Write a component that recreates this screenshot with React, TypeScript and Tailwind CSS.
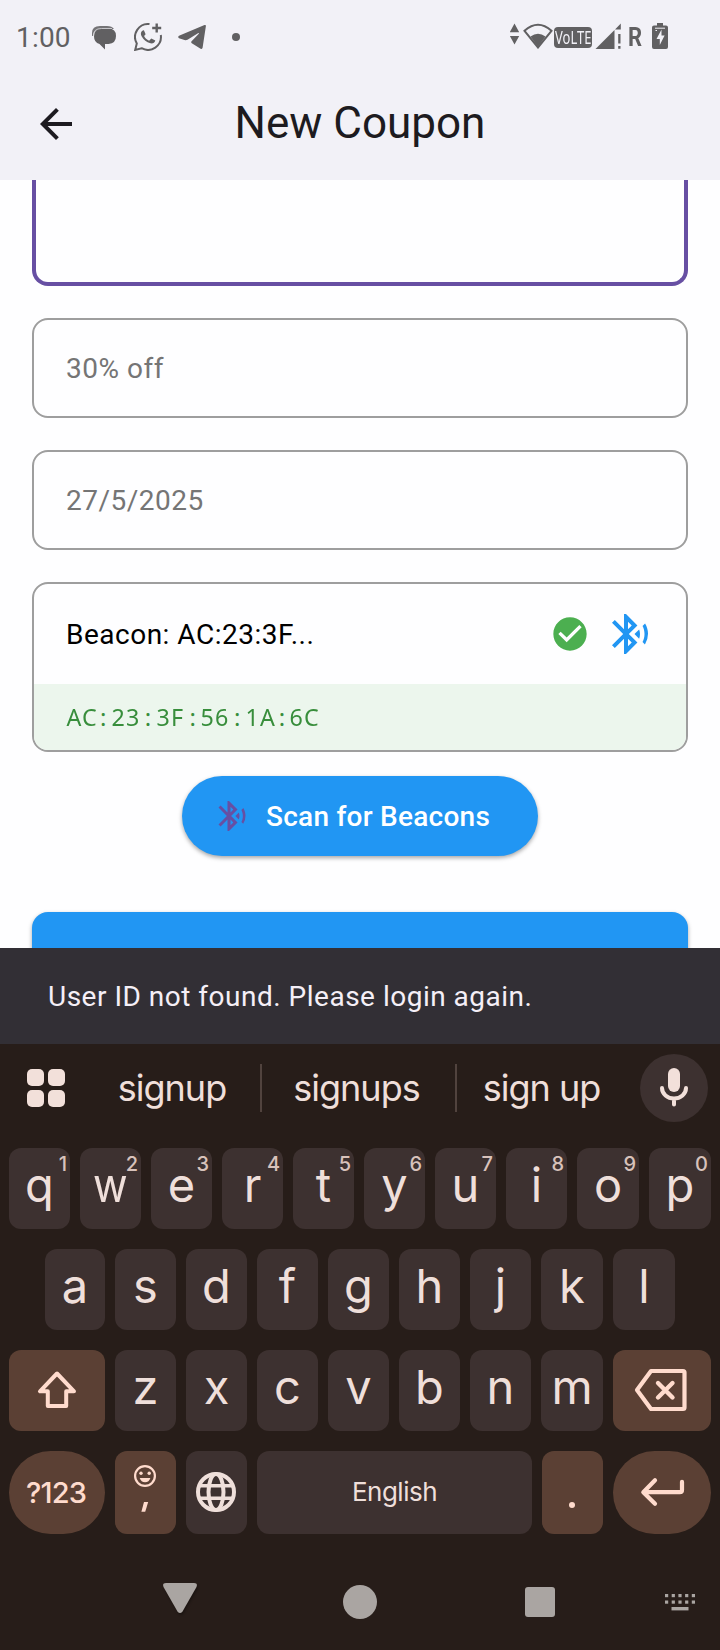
import React from 'react';
import { MdArrowBack, MdBluetoothSearching, MdCheckCircle } from 'react-icons/md';

function StatusBar() {
  return (
    <div className="flex h-[74px] items-center text-[#616062]">
      <span className="ml-4 w-[58px] pt-px text-[28px] leading-none tracking-[0.2px]">1:00</span>
      <svg viewBox="92 24 24 26" className="ml-[18px] h-[26px] w-6">
        <path d="M92 36v-3q0-7 8-7h7q5 0 7 3h-12q-8 0-9 7z" fill="#747376" />
        <path d="M102 28.500h6.500q7.500 0 7.500 7.500t-7.500 8h-3.500v5.500l-5.500-5.500q-5.500-1.500-5.500-7.500 0-8 8-8z" fill="currentColor" />
        <path d="M93.300 36q0-7.500 8.200-7.500H112" fill="none" stroke="#dedde2" strokeWidth=".8" />
      </svg>
      <svg viewBox="134 23 28 28" className="ml-[18px] size-7" fill="none" stroke="currentColor" strokeWidth="2">
        <path d="M149.500 24.100A13 13 0 0 0 136.800 43.500L135.200 49.900L141.600 48.200A13 13 0 0 0 160.800 35" />
        <path d="M156.700 23.500v9M152.200 28h9" strokeWidth="2.400" />
        <path d="M142.400 30.800c-1.800 1.300-1.900 3.400-.8 5.500 2 3.700 4.900 6 8.800 7 2.200.5 4.300-.4 4.900-2.700l-4-2-2.200 2.100c-2.400-1-4.100-2.600-5-4.700l1.500-1.700-1.700-4c-.5-.2-1-.1-1.500.5z" fill="currentColor" stroke="none" />
      </svg>
      <svg viewBox="178 25 28 26" className="ml-4 h-[26px] w-7" fill="currentColor">
        <path d="M179 36.800 204.500 26q1.500-.5 1.400 1l-3.300 21.800q-.4 1.600-2 .9l-8.800-5.500q-1.200-1 0-2.200l7-7.200q.5-1.100-.8-.6l-10.500 6.500q-1.500.7-3 .3l-5.500-1.700q-1.700-1.200 0-2.500z" />
      </svg>
      <span className="ml-[26px] size-2 rounded-full bg-[#616062]" />
      <svg viewBox="510 23 10 22" className="mb-[6px] ml-[270px] h-[22px] w-2.5" fill="currentColor">
        <path d="M514.500 23.500l4.700 8.700h-9.400zM514.500 44.500l4.700-8.500h-9.400z" />
      </svg>
      <svg viewBox="523 23 30 26" className="mb-[2px] ml-[3px] h-[26px] w-[30px]">
        <path d="M524.500 30.800q13.500-12 27 0L538 47.500z" fill="none" stroke="currentColor" strokeWidth="2" />
        <path d="M530.500 36.500q7.500-5.500 15 0L538 47z" fill="currentColor" />
      </svg>
      <div className="ml-px flex h-[21px] w-[38px] items-center justify-center rounded-[4px] bg-[#616062]">
        <span className="scale-x-[.72] font-['Noto_Sans'] text-[18px] leading-[21px] text-[#f2f1f7]">VoLTE</span>
      </div>
      <svg viewBox="595 23 27 26" className="mb-[2px] ml-[3px] h-[26px] w-[27px]" fill="currentColor">
        <path d="M595.500 49 614.500 30v19zM615 29.500l5.800-6v6zM618.200 34h2.300v9.500h-2.300zM618.200 46h2.300v2.800h-2.300z" />
      </svg>
      <span className="ml-[6px] w-[15px] text-[25px] leading-none font-bold">
        <span className="inline-block origin-left scale-x-[.88]">R</span>
      </span>
      <svg viewBox="652 23 16 26" className="mb-[2px] ml-[9px] h-[26px] w-4">
        <path d="M657 23h6v2.500h3q2 0 2 2V47q0 2-2 2h-12q-2 0-2-2V27.500q0-2 2-2h3z" fill="currentColor" />
        <path d="M655 28.200h10M655.500 30.500h1.500" stroke="#f2f1f7" strokeWidth="1" />
        <path d="M661.500 29.500l-5 9.500h3.300v6l4.800-9.500h-3.100z" fill="#f2f1f7" />
      </svg>
    </div>
  );
}

function Field({ children }: { children: string }) {
  return (
    <div className="flex h-[100px] items-center rounded-2xl border-2 border-[#9e9e9e] px-8 pt-[2px] text-[28px] tracking-[0.5px] text-[#757575]">
      {children}
    </div>
  );
}

function Form() {
  return (
    <div className="flex h-[768px] flex-col overflow-hidden bg-[#fefeff] px-8">
      <div className="h-[106px] shrink-0 rounded-b-2xl border-4 border-t-0 border-[#674fa3]" />
      <div className="mt-8 flex flex-col gap-8">
        <Field>30% off</Field>
        <Field>27/5/2025</Field>
        <div className="h-[170px] overflow-hidden rounded-2xl border-2 border-[#9e9e9e]">
          <div className="flex h-[100px] items-center pr-8 pl-8">
            <span className="flex-1 pt-[2px] text-[28px] tracking-[0.5px] text-black">Beacon: AC:23:3F...</span>
            <MdCheckCircle className="size-10 text-[#4caf50]" />
            <MdBluetoothSearching className="ml-4 size-12 text-[#2196f3]" />
          </div>
          <div className="h-[66px] bg-[#ecf6ed] pt-[17px] pl-8 font-['Noto_Sans'] text-[24px] leading-[32px] text-[#388e3c]">
            {'AC:23:3F:56:1A:6C'.split(/(:)/).map((part, i) => (
              <span key={i} className={part === ':' ? 'inline-block w-[14.9px] text-center' : 'inline-block w-[29.8px] text-center tracking-[1.2px]'}>
                <span className={part === ':' ? 'inline-block' : 'inline-block scale-x-[.97]'}>{part}</span>
              </span>
            ))}
          </div>
        </div>
      </div>
      <div className="mx-auto mt-6 flex h-20 w-[356px] shrink-0 items-center rounded-full bg-[#2196f3] pl-8 shadow-[0_2px_4px_rgba(0,0,0,0.35)]">
        <MdBluetoothSearching className="size-9 text-[#674fa3]" />
        <span className="ml-4 pt-[2px] text-[28px] font-medium tracking-[0.25px] whitespace-nowrap text-white">Scan for Beacons</span>
      </div>
      <div className="mt-14 h-24 shrink-0 rounded-2xl bg-[#2196f3] shadow-[0_2px_4px_rgba(0,0,0,0.35)]" />
    </div>
  );
}

function Key({ label, hint }: { label: string; hint?: string }) {
  return (
    <div className="relative flex items-center justify-center rounded-xl bg-[#3d3130] pb-[8px] text-[#efdfda]">
      <span className={label === 'w' ? 'scale-x-[.9] text-[47px] leading-none' : 'text-[47px] leading-none'}>{label}</span>
      {hint && <span className="absolute top-[6px] right-[3px] text-[20px] leading-none font-medium text-[#d8c2bb]">{hint}</span>}
    </div>
  );
}

const accent = 'flex items-center justify-center bg-[#5b4034] text-[#ffdbcd]';

function Keyboard() {
  return (
    <div className="flex h-[606px] flex-col bg-[#271d19] font-['Inter',sans-serif] text-[#efdfda]">
      <div className="flex h-[104px] items-start">
        <div className="mt-[25px] ml-[27px] grid grid-cols-2 gap-1">
          {[0, 1, 2, 3].map((n) => (
            <span key={n} className="size-[17px] rounded-[5px] bg-[#f2e0da]" />
          ))}
        </div>
        <div className="mt-[20px] ml-[22px] grid h-12 grid-cols-[173px_2px_193px_2px_171px] items-center text-center text-[36px] leading-none tracking-[-1px] whitespace-nowrap">
          <span className="pr-[3px]">signup</span>
          <span className="h-12 bg-[#51433e]" />
          <span className="pr-1">signups</span>
          <span className="h-12 bg-[#51433e]" />
          <span className="pr-[2px]">sign up</span>
        </div>
        <div className="mt-[10px] ml-[12px] size-[68px] rounded-full bg-[#3d3130]">
          <svg viewBox="640 1054 68 68" className="size-[68px]">
            <rect x="668" y="1068" width="12" height="24" rx="6" fill="#f2e0da" />
            <path d="M662 1088a12 10.500 0 0 0 24 0M674 1099v5.500" fill="none" stroke="#f2e0da" strokeWidth="4" strokeLinecap="round" />
          </svg>
        </div>
      </div>
      <div className="grid h-[81px] grid-cols-[61px_61px_61px_61px_61px_61px_61px_61px_62px_62px] gap-[10px] pl-[9px]">
        {'qwertyuiop'.split('').map((c, i) => (
          <Key key={c} label={c} hint={String((i + 1) % 10)} />
        ))}
      </div>
      <div className="mt-5 grid h-[81px] grid-cols-[60px_61px_61px_61px_61px_61px_61px_62px_62px] gap-[10px] pl-[45px]">
        {'asdfghjkl'.split('').map((c) => (
          <Key key={c} label={c} />
        ))}
      </div>
      <div className="mt-5 grid h-[81px] grid-cols-[96px_61px_61px_61px_61px_61px_61px_62px_98px] gap-[10px] pl-[9px]">
        <div className={`${accent} rounded-xl`}>
          <svg viewBox="9 1350 96 81" className="h-[81px] w-24">
            <path d="M57 1373.500 40 1391.300h7.800v14.700h18.400v-14.700H74z" fill="none" stroke="currentColor" strokeWidth="4" strokeLinejoin="round" />
          </svg>
        </div>
        {'zxcvbnm'.split('').map((c) => (
          <Key key={c} label={c} />
        ))}
        <div className={`${accent} rounded-xl`}>
          <svg viewBox="613 1350 98 81" className="h-[81px] w-[98px]" fill="none" stroke="currentColor" strokeWidth="4.200" strokeLinejoin="round" strokeLinecap="round">
            <path d="M651 1371h32q1.500 0 1.500 1.500v35q0 1.500-1.500 1.500h-32l-14-19z" />
            <path d="M658 1383l14.500 14.500m0-14.500L658 1397.500" strokeWidth="4.400" />
          </svg>
        </div>
      </div>
      <div className="mt-5 grid h-[83px] grid-cols-[96px_61px_61px_275px_61px_98px] gap-[10px] pl-[9px]">
        <div className={`${accent} rounded-full`}>
          <span className="pr-[2px] pb-px text-[29px] leading-none font-medium tracking-[-0.800px]">?123</span>
        </div>
        <div className={`${accent} rounded-xl`}>
          <svg viewBox="115 1451 61 83" className="h-[83px] w-[61px]">
            <circle cx="145" cy="1476" r="9.900" fill="none" stroke="currentColor" strokeWidth="2.200" />
            <circle cx="141" cy="1473.300" r="1.700" fill="currentColor" />
            <circle cx="149.200" cy="1473.300" r="1.700" fill="currentColor" />
            <path d="M139.700 1478h10.700q-1.300 4.200-5.350 4.200t-5.350-4.200z" fill="currentColor" />
            <path d="M144 1502h4.200l-3 9.800h-3.800z" fill="currentColor" />
          </svg>
        </div>
        <div className="rounded-xl bg-[#3d3130]">
          <svg viewBox="186 1451 61 83" className="h-[83px] w-[61px]" fill="none" stroke="currentColor" strokeWidth="4">
            <circle cx="216" cy="1492" r="18" />
            <ellipse cx="216" cy="1492" rx="7.500" ry="18" />
            <path d="M199 1485.800h34M199 1498.200h34" strokeWidth="3.600" />
          </svg>
        </div>
        <div className="flex items-center justify-center rounded-xl bg-[#3d3130]">
          <span className="pb-px text-[26px] leading-none tracking-[-0.500px]">English</span>
        </div>
        <div className={`${accent} rounded-xl`}>
          <span className="mt-[25px] ml-[-2px] size-[6px] rounded-full bg-[#ffdbcd]" />
        </div>
        <div className={`${accent} rounded-full`}>
          <svg viewBox="613 1451 98 83" className="h-[83px] w-[98px]" fill="none" stroke="currentColor" strokeWidth="4.200" strokeLinejoin="round" strokeLinecap="round">
            <path d="M682 1481.800v8.200q0 2.200-2.200 2.200H643.500M655 1480.200l-11.700 12L655 1503.800" />
          </svg>
        </div>
      </div>
      <div className="flex h-[116px] items-start pt-[49px] text-[#aaa5a2]">
        <svg viewBox="163 1583 34 31" className="ml-[163px] h-[31px] w-[34px] drop-shadow-[1px_2px_1px_rgba(0,0,0,0.3)]">
          <path d="M166 1583h28q4 0 2.500 4l-14 24.500q-2.500 3-5 0L163.500 1587q-1.500-4 2.500-4z" fill="currentColor" />
        </svg>
        <span className="mt-[2px] ml-[146px] size-[34px] rounded-full bg-[#aaa5a2]" />
        <span className="mt-1 ml-[148px] size-[30px] rounded-[3px] bg-[#aaa5a2]" />
        <svg viewBox="665 1593 30 18" className="mt-[10px] ml-[110px] h-[18px] w-[30px]" fill="currentColor">
          {[0, 1, 2, 3, 4].map((n) => (
            <React.Fragment key={n}>
              <rect x={665 + n * 6.700} y="1594" width="3.200" height="3.200" />
              <rect x={665 + n * 6.700} y="1600.500" width="3.200" height="3.200" />
            </React.Fragment>
          ))}
          <rect x="671.500" y="1607" width="17" height="3.400" />
        </svg>
      </div>
    </div>
  );
}

export default function App() {
  return (
    <div className="flex h-[1650px] w-[720px] flex-col overflow-hidden font-['Roboto',sans-serif]">
      <header className="h-[180px] bg-[#f2f1f7]">
        <StatusBar />
        <div className="grid h-[100px] grid-cols-[80px_1fr_80px] items-center">
          <MdArrowBack className="ml-8 size-12 text-[#1d1b20]" />
          <h1 className="pb-[2px] text-center text-[44px] leading-none text-[#1d1b20]">New Coupon</h1>
        </div>
      </header>
      <Form />
      <div className="flex h-24 items-center bg-[#322f35] px-12 pt-[2px] text-[28px] tracking-[0.500px] text-[#f5eff7]">
        User ID not found. Please login again.
      </div>
      <Keyboard />
    </div>
  );
}
